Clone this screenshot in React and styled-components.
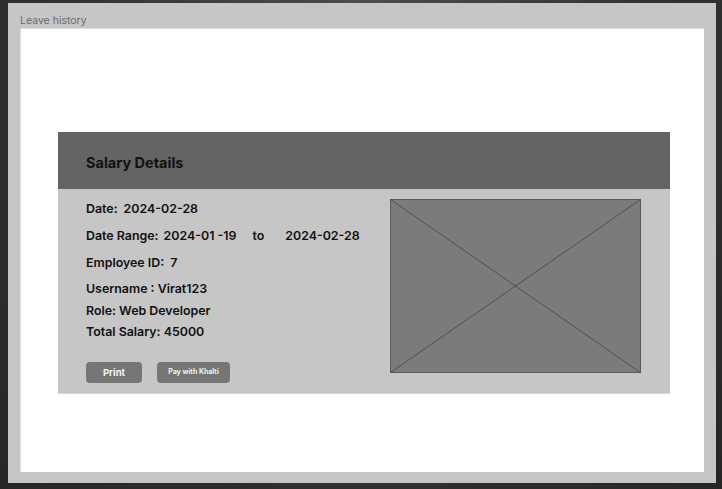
import React from "react";
import styled, { createGlobalStyle } from "styled-components";

const GlobalStyle = createGlobalStyle`
  html, body {
    margin: 0;
    padding: 0;
    height: 100%;
  }
  body {
    background: radial-gradient(ellipse at 50% 0%, #4c4c4c 0%, #333 55%, #262626 100%);
    font-family: Inter, "Noto Sans", sans-serif;
  }
`;

const Screen = styled.div`
  width: 722px;
  height: 489px;
  padding: 3px 6px 6px 8px;
  box-sizing: border-box;
`;

const Frame = styled.div`
  height: 480px;
  background: #c6c6c6;
  padding: 0 12px 11px 12px;
  box-sizing: border-box;
  display: flex;
  flex-direction: column;
`;

const FrameTitle = styled.div`
  height: 25px;
  line-height: 36px;
  font-size: 10.5px;
  color: #6c6c6c;
  overflow: hidden;
`;

const Canvas = styled.div`
  flex: 1;
  background: #fff;
  border-top: 1px solid #dedede;
  border-left: 1px solid #dedede;
  padding: 103px 32px 0 37px;
  box-sizing: border-box;
`;

const Card = styled.section`
  width: 612px;
  background: #c6c6c6;
  border-bottom: 1px solid #d6d6d6;
`;

const CardHeader = styled.header`
  height: 57px;
  background: #646464;
  display: flex;
  align-items: center;
  padding-left: 28px;
  padding-top: 3px;
  box-sizing: border-box;

  h2 {
    margin: 0;
    font-size: 14.5px;
    font-weight: 700;
    color: #111;
  }
`;

const CardBody = styled.div`
  display: flex;
  justify-content: space-between;
  padding: 10px 29px 20px 28px;
  height: 204px;
  box-sizing: border-box;
`;

const Details = styled.div`
  display: flex;
  flex-direction: column;
  padding-top: 1px;
`;

const Line = styled.div`
  margin-top: ${(p) => p.$mt}px;
  font-size: 12.4px;
  font-weight: 600;
  color: #111;
  height: 18px;
  line-height: 18px;
  white-space: nowrap;
`;

const Gap = styled.span`
  display: inline-block;
  width: ${(p) => p.$w}px;
`;

const Buttons = styled.div`
  display: flex;
  gap: 15px;
  margin-top: 21px;
`;

const Button = styled.button`
  height: 21px;
  width: ${(p) => p.$w}px;
  border: none;
  border-radius: 4px;
  background: #767676;
  color: #f4f4f4;
  font-family: Inter, "Noto Sans", sans-serif;
  font-weight: 700;
  font-size: ${(p) => p.$fs}px;
  padding: 0;
  padding-bottom: ${(p) => p.$pb || 0}px;
`;

const Placeholder = styled.svg`
  width: 251px;
  height: 174px;
  display: block;
`;

function ImagePlaceholder() {
  return (
    <Placeholder viewBox="0 0 251 174">
      <rect x="0.5" y="0.5" width="250" height="173" fill="#7b7b7b" stroke="#5a5a5a" />
      <line x1="0.5" y1="0.5" x2="250.5" y2="173.5" stroke="#464646" strokeWidth="0.8" />
      <line x1="250.5" y1="0.5" x2="0.5" y2="173.5" stroke="#464646" strokeWidth="0.8" />
    </Placeholder>
  );
}

export default function App() {
  return (
    <>
      <GlobalStyle />
      <Screen>
        <Frame>
          <FrameTitle>Leave history</FrameTitle>
          <Canvas>
            <Card>
              <CardHeader>
                <h2>Salary Details</h2>
              </CardHeader>
              <CardBody>
                <Details>
                  <Line $mt={0}>Date:<Gap $w={6} />2024-02-28</Line>
                  <Line $mt={9}>
                    Date Range:<Gap $w={5} />2024-01 -19<Gap $w={16} />to<Gap $w={21} />2024-02-28
                  </Line>
                  <Line $mt={9}>Employee ID:<Gap $w={6} />7</Line>
                  <Line $mt={8}>Username : Virat123</Line>
                  <Line $mt={4}>Role: Web Developer</Line>
                  <Line $mt={3}>Total Salary: 45000</Line>
                  <Buttons>
                    <Button $w={56} $fs={9.5}>Print</Button>
                    <Button $w={73} $fs={7} $pb={3}>Pay with Khalti</Button>
                  </Buttons>
                </Details>
                <ImagePlaceholder />
              </CardBody>
            </Card>
          </Canvas>
        </Frame>
      </Screen>
    </>
  );
}
